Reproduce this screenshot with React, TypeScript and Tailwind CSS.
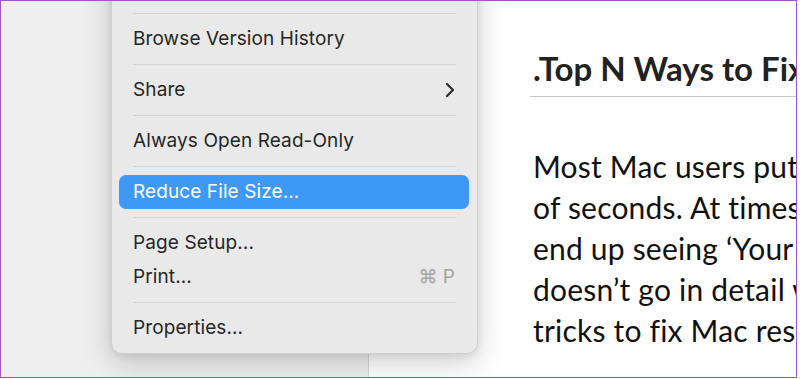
import React from "react";

type Item = { label: string; shortcut?: string; submenu?: boolean; active?: boolean };

const groups: Item[][] = [
  [{ label: "Export To", submenu: true }],
  [{ label: "Browse Version History" }],
  [{ label: "Share", submenu: true }],
  [{ label: "Always Open Read-Only" }],
  [{ label: "Reduce File Size...", active: true }],
  [{ label: "Page Setup..." }, { label: "Print...", shortcut: "⌘ P" }],
  [{ label: "Properties..." }],
];

const paragraph = [
  "Most Mac users put their Mac to sleep",
  "of seconds. At times, you might",
  "end up seeing ‘Your computer",
  "doesn’t go in detail why it",
  "tricks to fix Mac restarting",
];

function Chevron() {
  return (
    <svg width="10" height="16" viewBox="0 0 10 16" fill="none">
      <path d="M2 2l6 6-6 6" stroke="#2a2a2a" strokeWidth="2.2" strokeLinecap="round" strokeLinejoin="round" />
    </svg>
  );
}

function Menu() {
  return (
    <div className="absolute left-[110px] top-[-39px] w-[367px] flex flex-col rounded-[11px] bg-[#e9e9e9] border border-[#cfcfcf] shadow-[0_10px_30px_rgba(0,0,0,0.18),0_2px_8px_rgba(0,0,0,0.08)] font-['Inter',sans-serif]">
      {groups.map((group, gi) => (
        <React.Fragment key={gi}>
          {gi > 0 && <div className="h-px mx-[21px] bg-[#d2d2d2]" />}
          <div className="flex flex-col py-2">
            {group.map((item) => (
              <div
                key={item.label}
                className={
                  item.active
                    ? "h-[34px] ml-[7px] mr-[8px] pl-[14px] pr-[14px] rounded-[7px] bg-[#3d99f5] text-white flex items-center justify-between"
                    : "h-[34px] ml-[7px] mr-[8px] pl-[14px] pr-[14px] flex items-center justify-between text-[#262626]"
                }
              >
                <span className="text-[19px] tracking-[0.1px]">{item.label}</span>
                {item.submenu && <Chevron />}
                {item.shortcut && <span className="text-[19px] text-[#a3a3a3]">{item.shortcut}</span>}
              </div>
            ))}
          </div>
        </React.Fragment>
      ))}
    </div>
  );
}

export default function App() {
  return (
    <div className="w-[800px] h-[379px] bg-white">
      <div className="relative w-[797px] h-[378px] overflow-hidden border-[1.5px] border-[#a055c4] flex">
        <div className="w-[368px] shrink-0 bg-[#efefef] border-r border-[#d6d6d6]" />
        <div className="flex-1 bg-white pl-[164px] pt-[48px] overflow-hidden font-['Lato',sans-serif]">
          <div className="flex items-end border-b border-[#c7c7c7] pb-[8px] -ml-[3px] pl-[3px] whitespace-nowrap">
            <span className="text-[33px] font-bold text-[#222] leading-[39px]">.Top N Ways to Fix Mac</span>
          </div>
          <div className="mt-[49px] flex flex-col">
            {paragraph.map((line) => (
              <div key={line} className="text-[30px] leading-[41px] text-[#111] whitespace-nowrap tracking-[0.2px]">
                {line}
              </div>
            ))}
          </div>
        </div>
        <Menu />
      </div>
    </div>
  );
}
